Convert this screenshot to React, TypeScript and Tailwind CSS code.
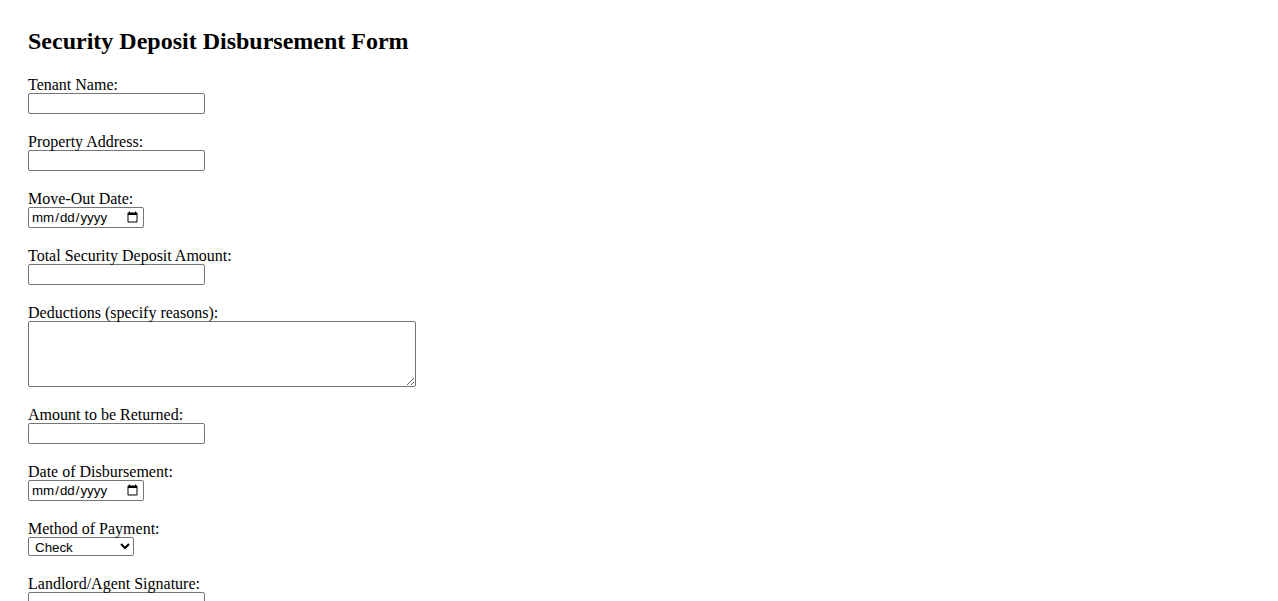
import { ReactNode } from "react";

const fieldBox =
  "block border border-[#767676] rounded-[2px] bg-white text-black text-[13.333px] leading-[15px] px-[2px] py-[1px] font-['Liberation_Sans',Arial,sans-serif]";

function Field({ label, children }: { label: string; children: ReactNode }) {
  return (
    <div className="mb-[18px]">
      <label className="block leading-[17px] pt-[1px]">{label}</label>
      {children}
    </div>
  );
}

function TextInput() {
  return <input type="text" className={`${fieldBox} w-[177px] h-[21px]`} />;
}

function DateInput() {
  return (
    <input
      type="date"
      className={`${fieldBox} w-[116px] h-[21px] font-['DejaVu_Sans_Mono',monospace] text-[12px]`}
    />
  );
}

export default function App() {
  return (
    <div className="min-h-screen bg-white text-black text-[16px] font-['Liberation_Serif','Times_New_Roman',serif] px-[28px] pt-[28px]">
      <h2 className="text-[24px] font-bold leading-[27px] mb-[20px]">Security Deposit Disbursement Form</h2>
      <form>
        <Field label="Tenant Name:">
          <TextInput />
        </Field>
        <Field label="Property Address:">
          <TextInput />
        </Field>
        <Field label="Move-Out Date:">
          <DateInput />
        </Field>
        <Field label="Total Security Deposit Amount:">
          <TextInput />
        </Field>
        <Field label="Deductions (specify reasons):">
          <textarea className={`${fieldBox} w-[388px] h-[66px]`} />
        </Field>
        <Field label="Amount to be Returned:">
          <TextInput />
        </Field>
        <Field label="Date of Disbursement:">
          <DateInput />
        </Field>
        <Field label="Method of Payment:">
          <select defaultValue="check" className={`${fieldBox} w-[106px] h-[19px] py-0 px-0 mb-[3px]`}>
            <option value="check">Check</option>
            <option value="transfer">Bank Transfer</option>
            <option value="cash">Cash</option>
          </select>
        </Field>
        <Field label="Landlord/Agent Signature:">
          <TextInput />
        </Field>
        <Field label="Date:">
          <DateInput />
        </Field>
        <button type="submit" className="border border-[#767676] rounded-[2px] bg-[#efefef] text-[13.333px] px-[6px] py-[1px] font-['Liberation_Sans',Arial,sans-serif]">
          Submit
        </button>
      </form>
    </div>
  );
}
